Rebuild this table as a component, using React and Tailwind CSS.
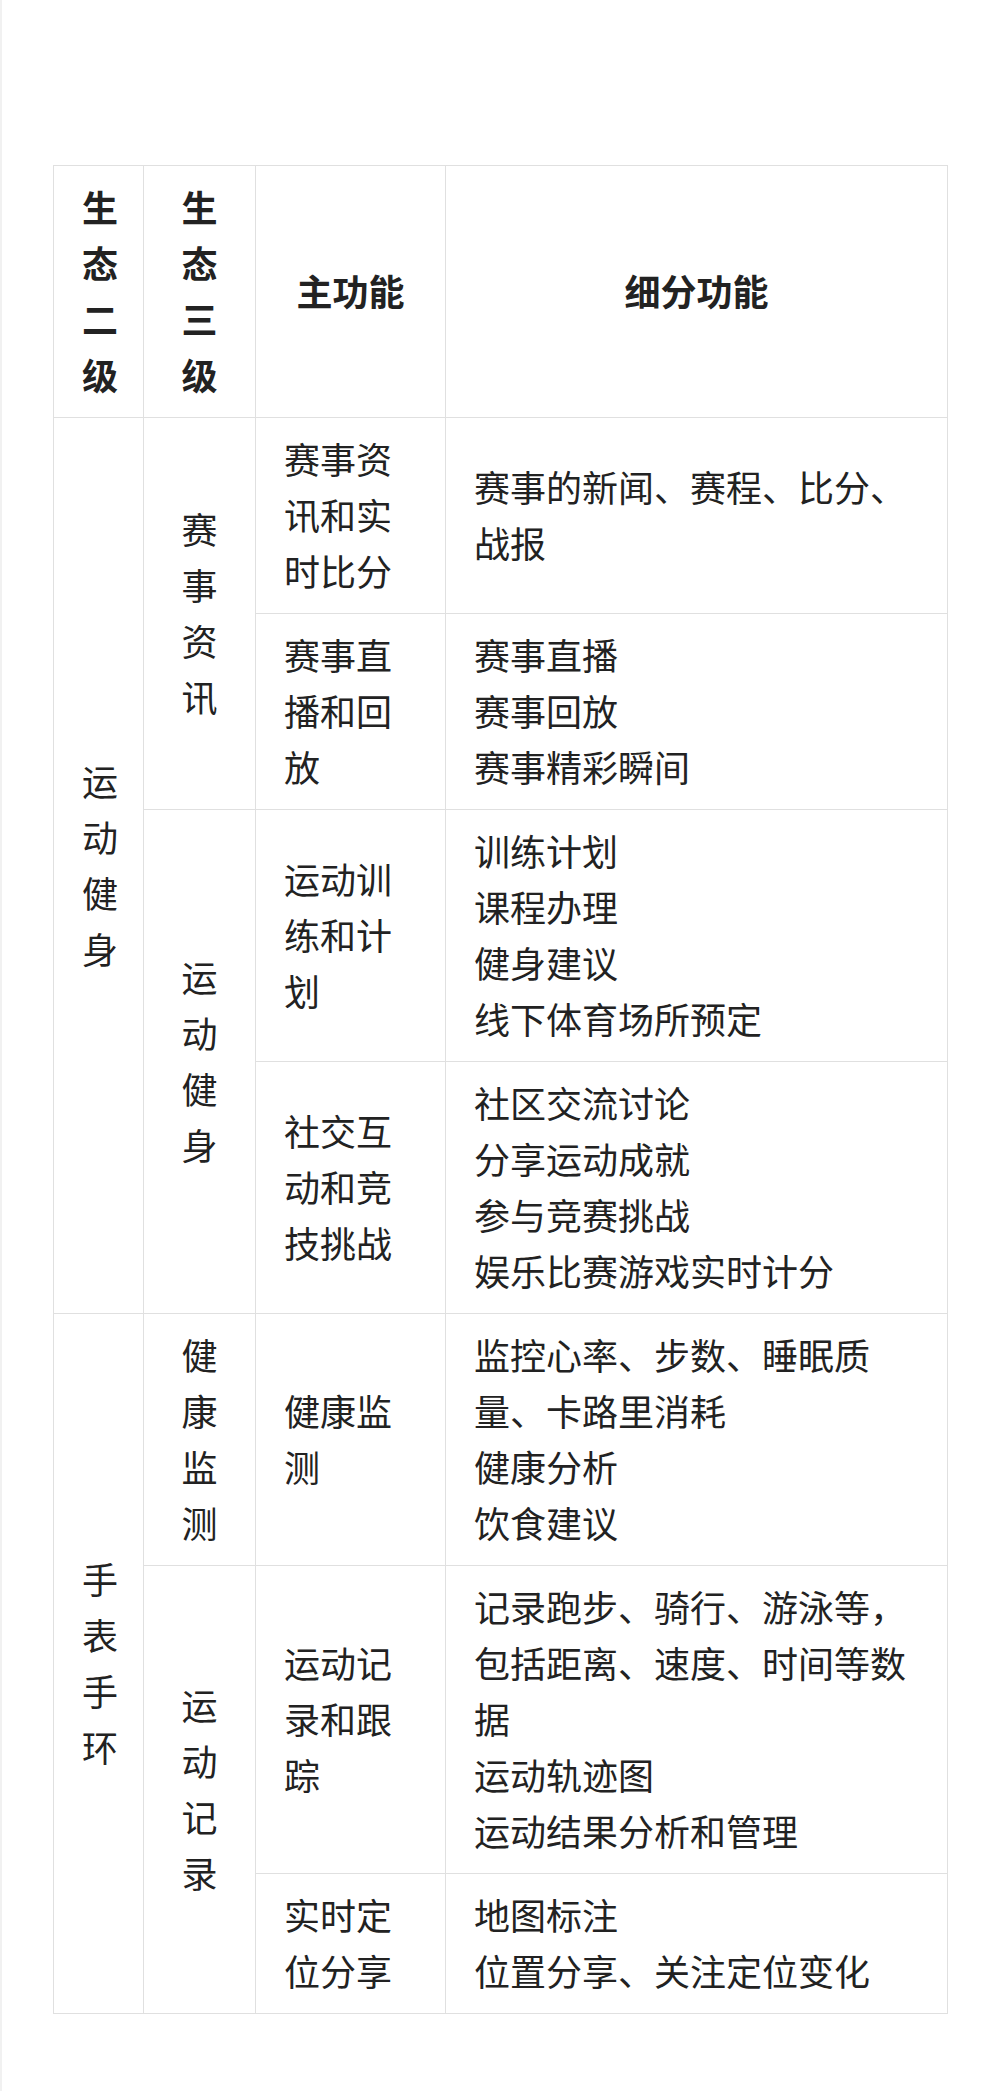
import React from "react";

const rows = [
    {
        level2: "运动健身",
        groups: [
            {
                level3: "赛事资讯",
                items: [
                    { main: "赛事资讯和实时比分", details: ["赛事的新闻、赛程、比分、战报"] },
                    { main: "赛事直播和回放", details: ["赛事直播", "赛事回放", "赛事精彩瞬间"] },
                ],
            },
            {
                level3: "运动健身",
                items: [
                    { main: "运动训练和计划", details: ["训练计划", "课程办理", "健身建议", "线下体育场所预定"] },
                    { main: "社交互动和竞技挑战", details: ["社区交流讨论", "分享运动成就", "参与竞赛挑战", "娱乐比赛游戏实时计分"] },
                ],
            },
        ],
    },
    {
        level2: "手表手环",
        groups: [
            {
                level3: "健康监测",
                items: [
                    { main: "健康监测", details: ["监控心率、步数、睡眠质量、卡路里消耗", "健康分析", "饮食建议"] },
                ],
            },
            {
                level3: "运动记录",
                items: [
                    { main: "运动记录和跟踪", details: ["记录跑步、骑行、游泳等，包括距离、速度、时间等数据", "运动轨迹图", "运动结果分析和管理"] },
                    { main: "实时定位分享", details: ["地图标注", "位置分享、关注定位变化"] },
                ],
            },
        ],
    },
];

// 单元格：行高 56，上下内边距略微偏上，贴近原图的字形位置
const cell = "border border-[#e0e0e0] px-[28px] pt-[11.5px] pb-[15.5px] align-middle";

const App = () => {
    return (
        <div
            className="min-h-[2091px] w-full bg-white border-l-2 border-[#f1f1f1] pt-[165px] px-[51px] text-[36px] leading-[56px] text-[#222222]"
            style={{ fontFamily: '"Noto Sans CJK SC", "Noto Sans", sans-serif' }}
        >
            <table className="w-[894px] table-fixed border-collapse">
                <colgroup>
                    <col className="w-[90px]" />
                    <col className="w-[112px]" />
                    <col className="w-[190px]" />
                    <col className="w-[502px]" />
                </colgroup>
                <thead>
                    <tr>
                        <th className={`${cell} text-center font-bold`}>生态二级</th>
                        <th className={`${cell} text-center font-bold`}>生态三级</th>
                        <th className={`${cell} text-center font-bold`}>主功能</th>
                        <th className={`${cell} text-center font-bold`}>细分功能</th>
                    </tr>
                </thead>
                <tbody>
                    {rows.map((row) => {
                        const rowSpan = row.groups.reduce((n, g) => n + g.items.length, 0);
                        return row.groups.map((group, gi) =>
                            group.items.map((item, ii) => (
                                <tr key={row.level2 + gi + ii}>
                                    {gi === 0 && ii === 0 && (
                                        <td rowSpan={rowSpan} className={`${cell} text-center`}>
                                            {row.level2}
                                        </td>
                                    )}
                                    {ii === 0 && (
                                        <td rowSpan={group.items.length} className={`${cell} text-center`}>
                                            {group.level3}
                                        </td>
                                    )}
                                    <td className={`${cell} text-left`}>{item.main}</td>
                                    <td className={`${cell} text-left`}>
                                        {item.details.map((d) => (
                                            <div key={d}>{d}</div>
                                        ))}
                                    </td>
                                </tr>
                            ))
                        );
                    })}
                </tbody>
            </table>
        </div>
    );
};

export default App;
